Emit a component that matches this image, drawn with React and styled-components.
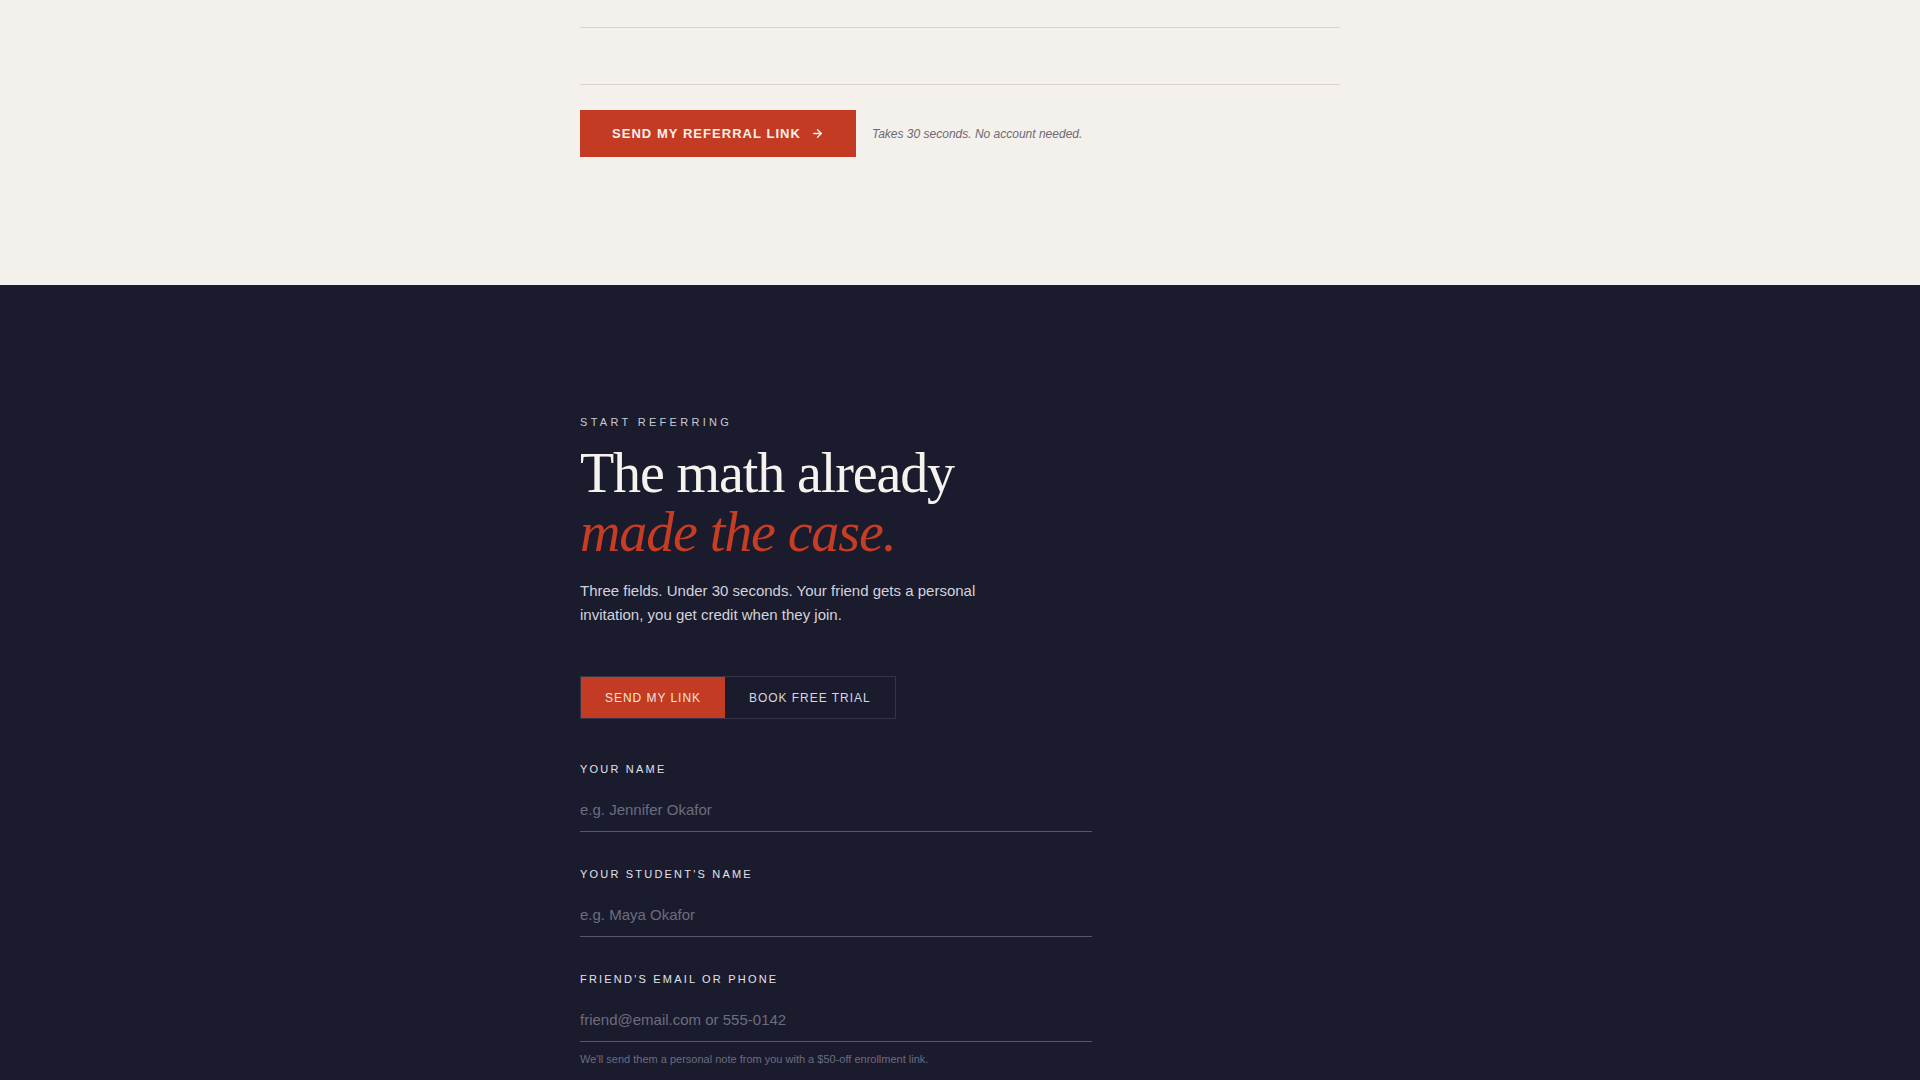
import styled, { createGlobalStyle } from 'styled-components';
import { ArrowRight } from 'lucide-react';

const GlobalStyle = createGlobalStyle`
  html, body {
    margin: 0;
    padding: 0;
    background: #1b1b2e;
  }
  * {
    box-sizing: border-box;
  }
`;

const LightSection = styled.section`
  background: #f4f0eb;
  padding: 0 0 128px;
`;

const DarkSection = styled.section`
  background: #1b1b2e;
  padding: 131px 0 0;
  min-height: 795px;
`;

const Inner = styled.div`
  width: 760px;
  margin: 0 auto;
`;

const LightField = styled.div`
  height: ${props => props.height}px;
  border-bottom: 1px solid #d9d3cd;
`;

const Actions = styled.div`
  display: flex;
  align-items: center;
  gap: 16px;
  margin-top: 25px;
`;

const PrimaryButton = styled.button`
  display: flex;
  align-items: center;
  gap: 10px;
  height: 47px;
  padding: 0 32px;
  border: none;
  background: #c23b22;
  color: #fbeee9;
  font-family: "Liberation Sans", Arial, sans-serif;
  font-weight: 700;
  font-size: 13px;
  letter-spacing: 0.08em;
  text-transform: uppercase;
  cursor: pointer;
`;

const Note = styled.span`
  font-family: "Liberation Sans", Arial, sans-serif;
  font-style: italic;
  font-size: 12px;
  color: #6c6a72;
`;

const Eyebrow = styled.div`
  font-family: "Liberation Sans", Arial, sans-serif;
  font-size: 11px;
  letter-spacing: 0.3em;
  color: #c9c9d3;
  text-transform: uppercase;
`;

const Heading = styled.h2`
  margin: 16px 0 0;
  font-family: "Liberation Serif", "Times New Roman", serif;
  font-weight: 400;
  font-size: 56px;
  line-height: 59px;
  letter-spacing: -0.02em;
  color: #f6f2ee;
`;

const Accent = styled.em`
  display: block;
  font-style: italic;
  color: #c63d24;
`;

const Lead = styled.p`
  margin: 17px 0 0;
  max-width: 420px;
  font-family: "Liberation Sans", Arial, sans-serif;
  font-size: 15px;
  line-height: 24px;
  color: #d3d3dc;
`;

const Tabs = styled.div`
  display: inline-flex;
  margin-top: 49px;
  border: 1px solid #35354a;
`;

const Tab = styled.button`
  height: 41px;
  padding: 0 ${props => props.pad}px;
  border: none;
  background: ${props => props.active ? '#c23b22' : 'transparent'};
  color: ${props => props.active ? '#f7e3dc' : '#d6d6df'};
  font-family: "Liberation Sans", Arial, sans-serif;
  font-size: 12px;
  letter-spacing: 0.08em;
  text-transform: uppercase;
  cursor: pointer;
`;

const Form = styled.div`
  width: 512px;
  margin-top: 44px;
  display: flex;
  flex-direction: column;
  gap: 36px;
`;

const Field = styled.label`
  display: flex;
  flex-direction: column;
`;

const Label = styled.span`
  font-family: "Liberation Sans", Arial, sans-serif;
  font-size: 11px;
  letter-spacing: 0.2em;
  color: #e2e2ea;
  text-transform: uppercase;
`;

const Input = styled.input`
  margin-top: 16px;
  height: 41px;
  padding: 0 0 3px;
  border: none;
  border-bottom: 1px solid #56566b;
  background: transparent;
  color: #f0f0f5;
  font-family: "Liberation Sans", Arial, sans-serif;
  font-size: 15px;
  outline: none;
  &::placeholder {
    color: #6c6c80;
  }
`;

const Hint = styled.div`
  margin-top: 11px;
  font-family: "Liberation Sans", Arial, sans-serif;
  font-size: 11px;
  color: #6c6c80;
`;

const FieldGroup = styled.div`
  display: flex;
  flex-direction: column;
`;

function App() {
  return (
    <>
      <GlobalStyle />
      <LightSection>
        <Inner>
          <LightField height={28} />
          <LightField height={57} />
          <Actions>
            <PrimaryButton>
              Send my referral link
              <ArrowRight size={13} strokeWidth={2.5} />
            </PrimaryButton>
            <Note>Takes 30 seconds. No account needed.</Note>
          </Actions>
        </Inner>
      </LightSection>
      <DarkSection>
        <Inner>
          <Eyebrow>Start referring</Eyebrow>
          <Heading>
            The math already
            <Accent>made the case.</Accent>
          </Heading>
          <Lead>
            Three fields. Under 30 seconds. Your friend gets a personal invitation, you get credit when they join.
          </Lead>
          <Tabs>
            <Tab active pad={24}>Send my link</Tab>
            <Tab pad={24}>Book free trial</Tab>
          </Tabs>
          <Form>
            <Field>
              <Label>Your name</Label>
              <Input placeholder="e.g. Jennifer Okafor" />
            </Field>
            <Field>
              <Label>Your student's name</Label>
              <Input placeholder="e.g. Maya Okafor" />
            </Field>
            <FieldGroup>
              <Field>
                <Label>Friend's email or phone</Label>
                <Input placeholder="friend@email.com or 555-0142" />
              </Field>
              <Hint>We'll send them a personal note from you with a $50-off enrollment link.</Hint>
            </FieldGroup>
          </Form>
        </Inner>
      </DarkSection>
    </>
  );
}

export default App;
